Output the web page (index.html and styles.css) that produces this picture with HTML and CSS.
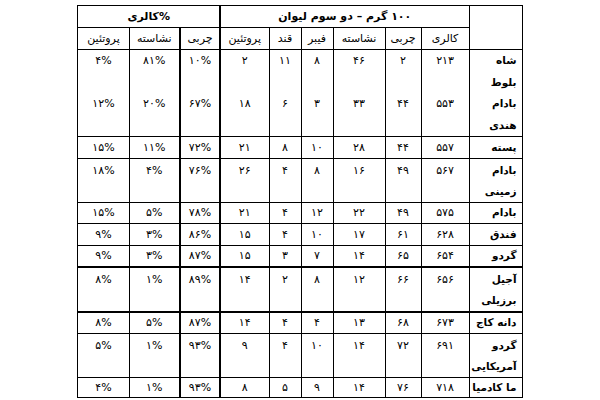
FILE: index.html
```html
<!DOCTYPE html>
<html lang="fa" dir="rtl">
<head>
<meta charset="utf-8">
<title>جدول مغزها</title>
<link rel="stylesheet" href="styles.css">
</head>
<body>
<table class="nuts">
  <colgroup>
    <col class="c-name">
    <col class="c-cal">
    <col class="c-fat">
    <col class="c-starch">
    <col class="c-fiber">
    <col class="c-sugar">
    <col class="c-prot">
    <col class="c-pfat">
    <col class="c-pstarch">
    <col class="c-pprot">
  </colgroup>
  <thead>
    <tr class="h1">
      <th rowspan="2" class="blank"></th>
      <th colspan="6" class="group g100">۱۰۰ گرم – دو سوم لیوان</th>
      <th colspan="3" class="group"><span dir="ltr">کالری%</span></th>
    </tr>
    <tr class="h2">
      <th>کالری</th>
      <th>چربی</th>
      <th>نشاسته</th>
      <th>فیبر</th>
      <th>قند</th>
      <th class="sep">پروتئین</th>
      <th class="sep">چربی</th>
      <th>نشاسته</th>
      <th>پروتئین</th>
    </tr>
  </thead>
  <tbody>
    <tr class="top r4">
      <td class="name">شاه<br>بلوط<br>بادام<br>هندی</td>
      <td>۲۱۳<br><br>۵۵۳</td>
      <td>۲<br><br>۴۴</td>
      <td>۴۶<br><br>۳۳</td>
      <td>۸<br><br>۳</td>
      <td>۱۱<br><br>۶</td>
      <td>۲<br><br>۱۸</td>
      <td>۱۰%<br><br>۶۷%</td>
      <td>۸۱%<br><br>۲۰%</td>
      <td>۴%<br><br>۱۲%</td>
    </tr>
    <tr class="r1">
      <td class="name">پسته</td>
      <td>۵۵۷</td><td>۴۴</td><td>۲۸</td><td>۱۰</td><td>۸</td><td>۲۱</td><td>۷۲%</td><td>۱۱%</td><td>۱۵%</td>
    </tr>
    <tr class="top r2">
      <td class="name">بادام<br>زمینی</td>
      <td>۵۶۷</td><td>۴۹</td><td>۱۶</td><td>۸</td><td>۴</td><td>۲۶</td><td>۷۶%</td><td>۴%</td><td>۱۸%</td>
    </tr>
    <tr class="r1">
      <td class="name">بادام</td>
      <td>۵۷۵</td><td>۴۹</td><td>۲۲</td><td>۱۲</td><td>۴</td><td>۲۱</td><td>۷۸%</td><td>۵%</td><td>۱۵%</td>
    </tr>
    <tr class="r1">
      <td class="name">فندق</td>
      <td>۶۲۸</td><td>۶۱</td><td>۱۷</td><td>۱۰</td><td>۴</td><td>۱۵</td><td>۸۶%</td><td>۳%</td><td>۹%</td>
    </tr>
    <tr class="r1">
      <td class="name">گردو</td>
      <td>۶۵۴</td><td>۶۵</td><td>۱۴</td><td>۷</td><td>۳</td><td>۱۵</td><td>۸۷%</td><td>۳%</td><td>۹%</td>
    </tr>
    <tr class="top thick r2">
      <td class="name">آجیل<br>برزیلی</td>
      <td>۶۵۶</td><td>۶۶</td><td>۱۲</td><td>۸</td><td>۲</td><td>۱۴</td><td>۸۹%</td><td>۱%</td><td>۸%</td>
    </tr>
    <tr class="thick r1">
      <td class="name">دانه کاج</td>
      <td>۶۷۳</td><td>۶۸</td><td>۱۳</td><td>۴</td><td>۴</td><td>۱۴</td><td>۸۷%</td><td>۵%</td><td>۸%</td>
    </tr>
    <tr class="top r2">
      <td class="name">گردو<br>آمریکایی</td>
      <td>۶۹۱</td><td>۷۲</td><td>۱۴</td><td>۱۰</td><td>۴</td><td>۹</td><td>۹۳%</td><td>۱%</td><td>۵%</td>
    </tr>
    <tr class="r1 last">
      <td class="name">ما کادمیا</td>
      <td>۷۱۸</td><td>۷۶</td><td>۱۴</td><td>۹</td><td>۵</td><td>۸</td><td>۹۳%</td><td>۱%</td><td>۴%</td>
    </tr>
  </tbody>
</table>
</body>
</html>
```

FILE: styles.css
```css
html, body {
  margin: 0;
  padding: 0;
  background: #ffffff;
}

body {
  padding-top: 5px;
  font-family: "DejaVu Sans", sans-serif;
  font-size: 11px;
  color: #000000;
}

.nuts {
  direction: rtl;
  border-collapse: collapse;
  table-layout: fixed;
  width: 444px;
  margin: 0 auto;
}

.c-name { width: 53px; }
.c-cal { width: 48px; }
.c-fat { width: 36px; }
.c-starch { width: 52px; }
.c-fiber { width: 32px; }
.c-sugar { width: 32px; }
.c-prot { width: 49px; }
.c-pfat { width: 40px; }
.c-pstarch { width: 51px; }
.c-pprot { width: 51px; }

.nuts th,
.nuts td {
  border: 1px solid #000000;
  padding: 0;
  text-align: center;
  line-height: 19px;
  white-space: nowrap;
  overflow: hidden;
}

.nuts th {
  font-weight: normal;
}

.h1 {
  height: 22px;
}

.h2 {
  height: 22px;
}

.h1 .group {
  font-weight: bold;
}

.h1 .g100 {
  border-left-width: 2px;
}

.h2 th.sep {
  border-left-width: 2px;
}

.nuts td {
  vertical-align: middle;
}

.r1 { height: 21.5px; }
.r2 { height: 43.5px; }
.r4 { height: 86px; }
.last { height: 20px; }

.nuts tr.top td {
  vertical-align: top;
  padding-top: 2px;
}

.nuts tr.r2 td.name {
  line-height: 21px;
  padding-top: 1px;
}

.nuts tr.r4 td {
  line-height: 21.5px;
  padding-top: 0;
}

.nuts td.name {
  text-align: right;
  padding-right: 5px;
  font-weight: bold;
  font-size: 10.5px;
}

.nuts tbody td:nth-child(7),
.nuts tbody td:nth-child(8) {
  border-left-width: 2px;
}

.nuts tr.thick td {
  border-top-width: 2px;
}
```
